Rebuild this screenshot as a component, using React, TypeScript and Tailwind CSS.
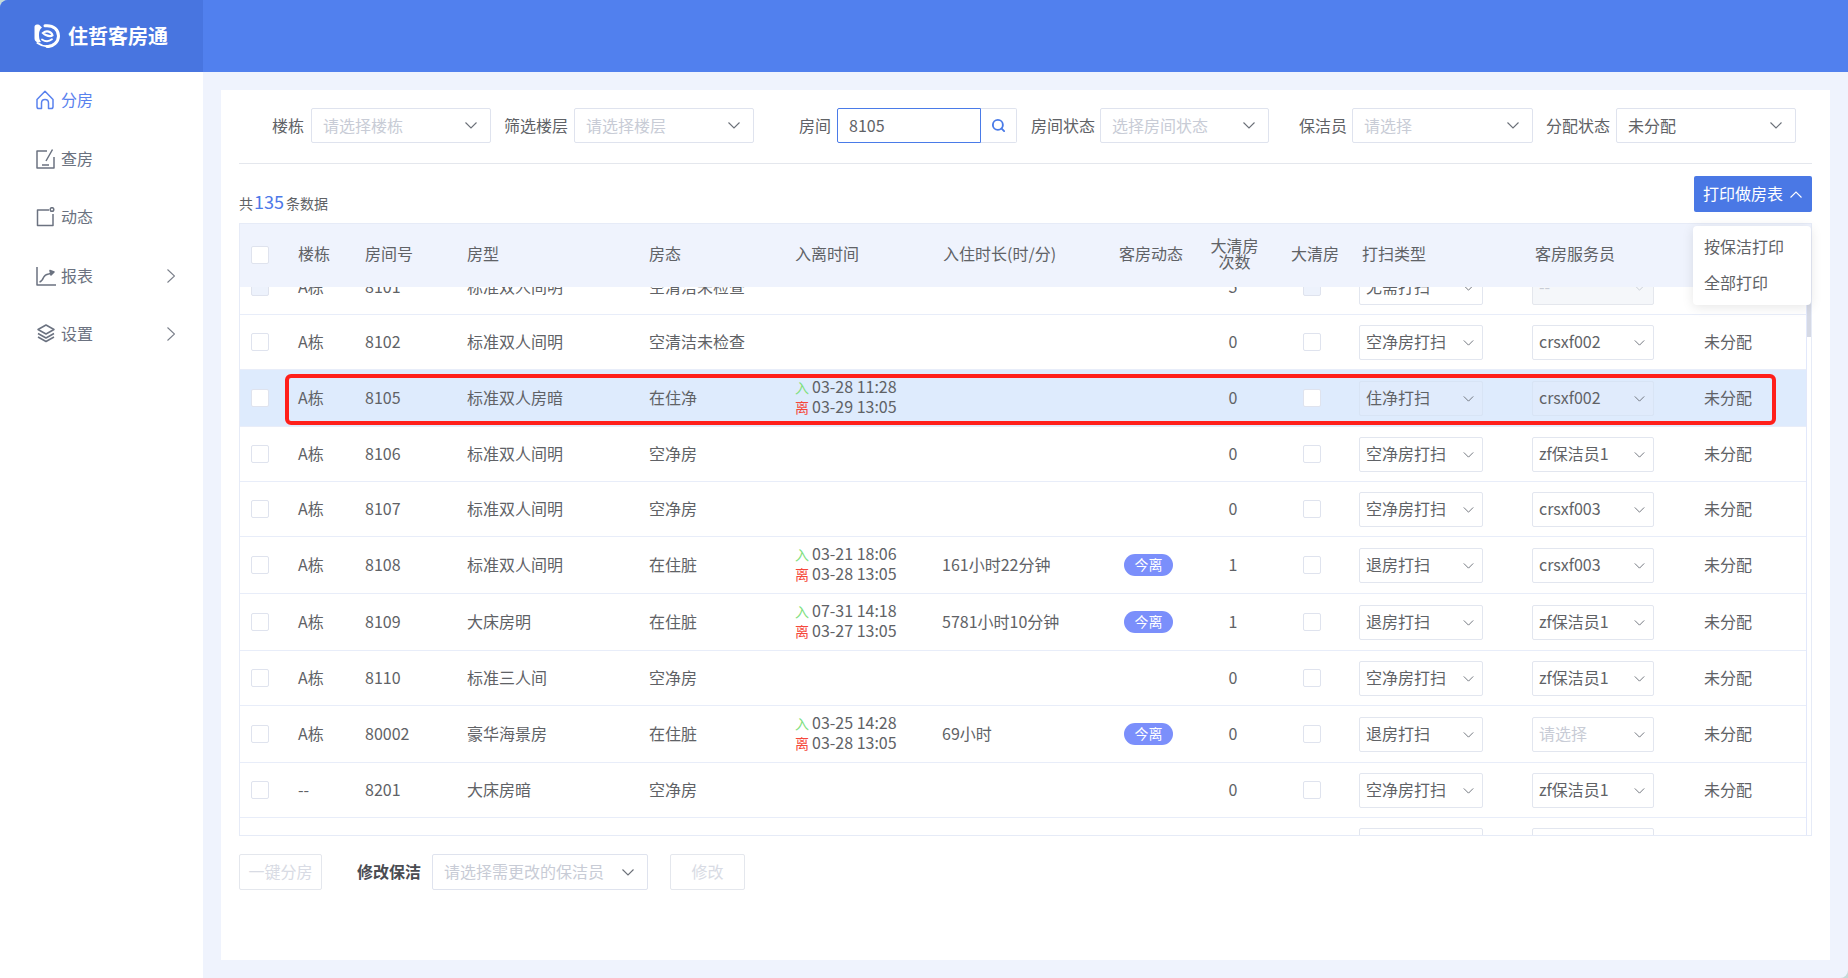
import React from "react";
import { Search } from "lucide-react";

const Chev = ({ cls = "w-[12px] h-[7px]", up = false, color = "#6b7078" }: { cls?: string; up?: boolean; color?: string }) => (
  <svg viewBox="0 0 12 7" className={cls} fill="none" stroke={color} strokeWidth="1.1">
    <path d={up ? "M.5 6.5 6 1l5.5 5.5" : "M.5.5 6 6 11.5.5"} />
  </svg>
);

const Logo = () => (
  <svg viewBox="0 0 26 24" className="w-[26px] h-[24px]" fill="none" stroke="#fff" strokeLinecap="round">
    <path d="M11 1.800C20 .8 24.500 6.500 24.500 12c0 6-5.500 11-11.500 10.500" strokeWidth="3" />
    <path d="M.5 3C.5 1.500 1.500.5 3 .5h1c1.500 0 2.500 1.500 4 3C5.500 5.500 5 8 5 11c0 3 .5 5 2 7-2.500 1-4.500.5-6-1.500-.4-.7-.5-1.500-.5-2.500Z" fill="#fff" stroke="none" />
    <path d="M18.500 11.500C17.500 7.500 12.500 6 9 9c2.500 2.500 5.500 3.500 8.500 3" strokeWidth="2.200" />
    <path d="M3.500 19c3.500 2.500 8.500 4 13 2.800" strokeWidth="2" />
    <path d="M8 15.500c3 2 7 2.200 10-.2" strokeWidth="1.800" />
  </svg>
);

const icons: Record<string, React.ReactNode> = {
  home: (
    <path d="M1 9.500 9 1.200l8 8.300v7.200c0 1-.8 1.800-1.800 1.800h-2.700v-5.500c0-2-1.500-3.500-3.500-3.500s-3.500 1.500-3.500 3.500v5.500H2.800c-1 0-1.800-.8-1.800-1.800Z" />
  ),
  check: (
    <>
      <path d="M11 2H1v17h17V8" />
      <path d="M16.500.5 10 12M6 16h7" />
    </>
  ),
  dyn: (
    <>
      <path d="M13 3H1.500v15.500H17V7" />
      <circle cx="16" cy="2.500" r="1.800" />
    </>
  ),
  report: (
    <>
      <path d="M1 1v18h19" />
      <path d="M3.500 16c2-.5 3-2 4-4.500 1-2 2-3 5-3.500L15 7.500" />
      <path d="M14 4.500l4 1.500-3 3Z" fill="currentColor" />
    </>
  ),
  set: (
    <>
      <path d="M10 1 2 5.500l8 4.500 8-4.500Z" />
      <path d="M2 9.500l8 4.500 8-4.500M2 13l8 4.500 8-4.500" />
    </>
  ),
};

const NavItem = ({ icon, label, active, arrow }: { icon: string; label: string; active?: boolean; arrow?: boolean }) => (
  <div className={`h-[58.5px] flex items-center pl-[36px] pr-[28px] text-[16px] ${active ? "text-[#5a82ee]" : "text-[#6b7280]"}`}>
    <svg viewBox="0 0 20 20" className="w-[20px] h-[20px] shrink-0" fill="none" stroke="currentColor" strokeWidth="1.500" strokeLinejoin="round">
      {icons[icon]}
    </svg>
    <span className="ml-[5px] pb-[2px]">{label}</span>
    {arrow && (
      <svg viewBox="0 0 8 14" className="w-[8px] h-[14px] ml-auto" fill="none" stroke="#7a7f8a" strokeWidth="1.100">
        <path d="M.5.500 7.500 7l-7 6.500" />
      </svg>
    )}
  </div>
);

const Field = ({ label, w, ml, value, ph, lw }: { label: string; w: string; ml: string; lw?: string; value?: string; ph?: string }) => (
  <div className={`flex items-center ${ml}`}>
    <span className={`text-[16px] text-[#606266] whitespace-nowrap pb-[2px] ${lw ?? "mr-[7px]"}`}>{label}</span>
    <div className={`${w} h-[35px] border border-[#dfe3ee] rounded-[2px] flex items-center justify-between pl-[11px] pr-[13px] bg-white`}>
      <span className={`text-[16px] pb-[2px] ${value ? "text-[#606266]" : "text-[#c8ccd6]"}`}>{value ?? ph}</span>
      <Chev />
    </div>
  </div>
);

const RowSelect = ({ w, value, ph, disabled, tint }: { w: string; value?: string; ph?: boolean; disabled?: boolean; tint?: boolean }) => (
  <div
    className={`${w} h-[35px] border rounded-[2px] flex items-center justify-between pl-[6px] pr-[8px] text-[16px] ${
      disabled ? "bg-[#f5f7fa] border-[#e4e7ed]" : tint ? "bg-[#e0ebfc] border-[#d8e4f5]" : "bg-white border-[#e2e6ef]"
    } ${ph || disabled ? "text-[#c8ccd6]" : "text-[#606266]"}`}
  >
    <span className="whitespace-nowrap pb-[2px]">{value}</span>
    <Chev cls="w-[11px] h-[6px] mt-[2px]" color={disabled ? "#c8ccd6" : "#6b7078"} />
  </div>
);

const Box = ({ disabled }: { disabled?: boolean }) => (
  <div className={`w-[18px] h-[18px] rounded-[2px] border border-[#dfe3ee] ${disabled ? "bg-[#edf2fc]" : "bg-white"}`} />
);

const cols = "grid grid-cols-[58px_67px_102px_182px_146px_148px_176px_74px_80px_86px_173px_172px_103px] items-center";

type Row = {
  b: string; n: string; t: string; s: string; i?: string; o?: string; d?: string; tag?: boolean; c: string; ty: string; st: string;
  h: string; sel?: boolean; ph?: boolean; dis?: boolean;
};

const rows: Row[] = [
  { b: "A栋", n: "8101", t: "标准双人间明", s: "空清洁未检查", c: "5", ty: "无需打扫", st: "--", h: "h-[55px]", dis: true },
  { b: "A栋", n: "8102", t: "标准双人间明", s: "空清洁未检查", c: "0", ty: "空净房打扫", st: "crsxf002", h: "h-[55px]" },
  { b: "A栋", n: "8105", t: "标准双人房暗", s: "在住净", i: "03-28 11:28", o: "03-29 13:05", c: "0", ty: "住净打扫", st: "crsxf002", h: "h-[57px]", sel: true },
  { b: "A栋", n: "8106", t: "标准双人间明", s: "空净房", c: "0", ty: "空净房打扫", st: "zf保洁员1", h: "h-[55px]" },
  { b: "A栋", n: "8107", t: "标准双人间明", s: "空净房", c: "0", ty: "空净房打扫", st: "crsxf003", h: "h-[55px]" },
  { b: "A栋", n: "8108", t: "标准双人间明", s: "在住脏", i: "03-21 18:06", o: "03-28 13:05", d: "161小时22分钟", tag: true, c: "1", ty: "退房打扫", st: "crsxf003", h: "h-[57px]" },
  { b: "A栋", n: "8109", t: "大床房明", s: "在住脏", i: "07-31 14:18", o: "03-27 13:05", d: "5781小时10分钟", tag: true, c: "1", ty: "退房打扫", st: "zf保洁员1", h: "h-[57px]" },
  { b: "A栋", n: "8110", t: "标准三人间", s: "空净房", c: "0", ty: "空净房打扫", st: "zf保洁员1", h: "h-[55px]" },
  { b: "A栋", n: "80002", t: "豪华海景房", s: "在住脏", i: "03-25 14:28", o: "03-28 13:05", d: "69小时", tag: true, c: "0", ty: "退房打扫", st: "请选择", h: "h-[57px]", ph: true },
  { b: "--", n: "8201", t: "大床房暗", s: "空净房", c: "0", ty: "空净房打扫", st: "zf保洁员1", h: "h-[55px]" },
  { b: "", n: "", t: "", s: "", c: "", ty: "", st: "", h: "h-[55px]" },
];

export default function App() {
  return (
    <div className="h-screen w-full bg-[#c5dbd8] font-['Noto_Sans_CJK_SC','Liberation_Sans',sans-serif]">
      <div className="h-full rounded-tl-[8px] rounded-br-[8px] overflow-hidden flex flex-col bg-[#eff3fd]">
        <header className="h-[72px] shrink-0 bg-[#5180ee] flex">
          <div className="w-[203px] bg-[#4875e0] flex items-center pl-[34px]">
            <Logo />
            <span className="ml-[8px] text-[20px] font-bold text-white leading-none">住哲客房通</span>
          </div>
        </header>
        <div className="flex-1 flex min-h-0">
          <aside className="w-[203px] shrink-0 bg-white">
            <nav className="-mt-px">
              <NavItem icon="home" label="分房" active />
              <NavItem icon="check" label="查房" />
              <NavItem icon="dyn" label="动态" />
              <NavItem icon="report" label="报表" arrow />
              <NavItem icon="set" label="设置" arrow />
            </nav>
          </aside>
          <main className="flex-1 p-[18px] min-w-0">
            <div className="h-full bg-white px-[18px] pt-[18px] flex flex-col">
              <div className="flex items-center h-[35px] shrink-0">
                <Field label="楼栋" ml="ml-[33px]" w="w-[180px]" ph="请选择楼栋" />
                <Field label="筛选楼层" ml="ml-[13px]" w="w-[180px]" ph="请选择楼层" lw="mr-[6px]" />
                <div className="flex items-center ml-[45px]">
                  <span className="text-[16px] text-[#606266] mr-[6px] pb-[2px]">房间</span>
                  <div className="w-[144px] h-[35px] border border-[#4a7be8] rounded-l-[2px] flex items-center pl-[11px] pb-[2px] text-[16px] text-[#606266]">8105</div>
                  <div className="w-[36px] h-[35px] border border-l-0 border-[#dfe3ee] rounded-r-[2px] flex items-center justify-center">
                    <Search size={15} strokeWidth={3} color="#4a7be8" />
                  </div>
                </div>
                <Field label="房间状态" ml="ml-[14px]" w="w-[169px]" ph="选择房间状态" lw="mr-[5px]" />
                <Field label="保洁员" ml="ml-[30px]" w="w-[181px]" ph="请选择" lw="mr-[5px]" />
                <Field label="分配状态" ml="ml-[13px]" w="w-[180px]" value="未分配" lw="mr-[6px]" />
              </div>
              <div className="h-px bg-[#e4e7ed] mt-[20px] shrink-0" />
              <div className="relative flex items-center justify-between h-[36px] mt-[12px] shrink-0">
                <div className="self-end mb-[2px] flex items-end text-[#606266] text-[14px] leading-none">
                  <span>共</span>
                  <span className="text-[18px] text-[#4c78e8] ml-[1px] mr-[2px]">135</span>
                  <span>条数据</span>
                </div>
                <div className="w-[118px] h-[36px] bg-[#4a78e5] rounded-[2px] flex items-center pl-[9px] text-[16px] text-white">
                  <span className="pb-[2px]">打印做房表</span>
                  <Chev up color="#fff" cls="w-[12px] h-[7px] ml-[7px]" />
                </div>
                <div className="absolute z-20 right-px top-[50px] w-[118px] h-[79px] bg-white rounded-[4px] shadow-[0_2px_12px_rgba(0,0,0,0.1)] py-[3px] pl-[11px] text-[16px] text-[#606266]">
                  <div className="h-[36px] flex items-center pb-[2px]">按保洁打印</div>
                  <div className="h-[36px] flex items-center pb-[2px]">全部打印</div>
                </div>
              </div>
              <div className="h-[613px] mt-[11px] shrink-0 border border-[#e6ebf7] flex flex-col">
                <div className={`${cols} h-[63px] pb-[2px] shrink-0 bg-[#eff3fd] text-[16px] text-[#606266] relative z-10 [&>div:not(:first-child)]:pb-[3px]`}>
                  <div className="pl-[11px]"><Box /></div>
                  <div>楼栋</div>
                  <div>房间号</div>
                  <div>房型</div>
                  <div>房态</div>
                  <div>入离时间</div>
                  <div className="whitespace-nowrap">入住时长(时/分)</div>
                  <div className="whitespace-nowrap">客房动态</div>
                  <div className="text-center leading-[16px] pl-[3px]">大清房<br />次数</div>
                  <div className="pl-[18px]">大清房</div>
                  <div className="pl-[3px]">打扫类型</div>
                  <div className="pl-[3px]">客房服务员</div>
                  <div />
                </div>
                <div className="flex-1 min-h-0 flex overflow-hidden">
                  <div className="w-[1567px] shrink-0 border-r border-[#e2e8fb]">
                    <div className="-mt-[27px]">
                      {rows.map((r, idx) => (
                        <div
                          key={idx}
                          className={`${cols} ${r.h} relative border-b border-[#e8edf9] text-[16px] text-[#606266] ${r.sel ? "bg-[#deebfd]" : "bg-white"}`}
                        >
                          <div className="pl-[11px]"><Box disabled={r.dis} /></div>
                          <div className="pb-[2px]">{r.b}</div>
                          <div className="pb-[2px]">{r.n}</div>
                          <div className="pb-[2px]">{r.t}</div>
                          <div className="pb-[2px]">{r.s}</div>
                          <div className="leading-[19.5px] whitespace-nowrap pb-[2px]">
                            {r.i && (
                              <>
                                <div><span className="text-[14px] text-[#7ee07e] mr-[3px]">入</span>{r.i}</div>
                                <div><span className="text-[14px] text-[#f5483b] mr-[3px]">离</span>{r.o}</div>
                              </>
                            )}
                          </div>
                          <div className="whitespace-nowrap pb-[2px] -ml-px">{r.d}</div>
                          <div className="pl-[5px]">
                            {r.tag && (
                              <div className="w-[49px] h-[22px] rounded-full bg-[#7b8ffb] text-white text-[14px] flex items-center justify-center pb-[1px]">今离</div>
                            )}
                          </div>
                          <div className="text-center pb-[2px]">{r.c}</div>
                          <div className="pl-[30px]"><Box disabled={r.dis} /></div>
                          <div><RowSelect w="w-[124px]" value={r.ty} tint={r.sel} /></div>
                          <div><RowSelect w="w-[122px]" value={r.st} ph={r.ph} disabled={r.dis} tint={r.sel} /></div>
                          <div className="pb-[2px]">{r.dis || !r.n ? "" : "未分配"}</div>
                          {r.sel && (
                            <div className="absolute left-[45px] right-[30px] top-[4px] h-[51px] border-[4px] border-[#ff1f1a] rounded-[6px]" />
                          )}
                        </div>
                      ))}
                    </div>
                  </div>
                  <div className="w-[4px] shrink-0">
                    <div className="h-[50px] bg-[#d5d9e5]" />
                  </div>
                </div>
              </div>
              <div className="flex items-center mt-[18px] shrink-0 text-[16px]">
                <div className="w-[83px] h-[36px] border border-[#e4e7ed] rounded-[2px] flex items-center justify-center pb-[2px] text-[#d8dbe4]">一键分房</div>
                <span className="ml-[35px] pb-[2px] font-bold text-[#4a4c52]">修改保洁</span>
                <div className="ml-[11px] w-[216px] h-[36px] border border-[#dfe3ee] rounded-[2px] flex items-center justify-between pl-[11px] pr-[13px]">
                  <span className="text-[#c8ccd6] pb-[2px]">请选择需更改的保洁员</span>
                  <Chev />
                </div>
                <div className="ml-[22px] w-[75px] h-[36px] border border-[#e4e7ed] rounded-[2px] flex items-center justify-center pb-[2px] text-[#d8dbe4]">修改</div>
              </div>
            </div>
          </main>
        </div>
      </div>
    </div>
  );
}
